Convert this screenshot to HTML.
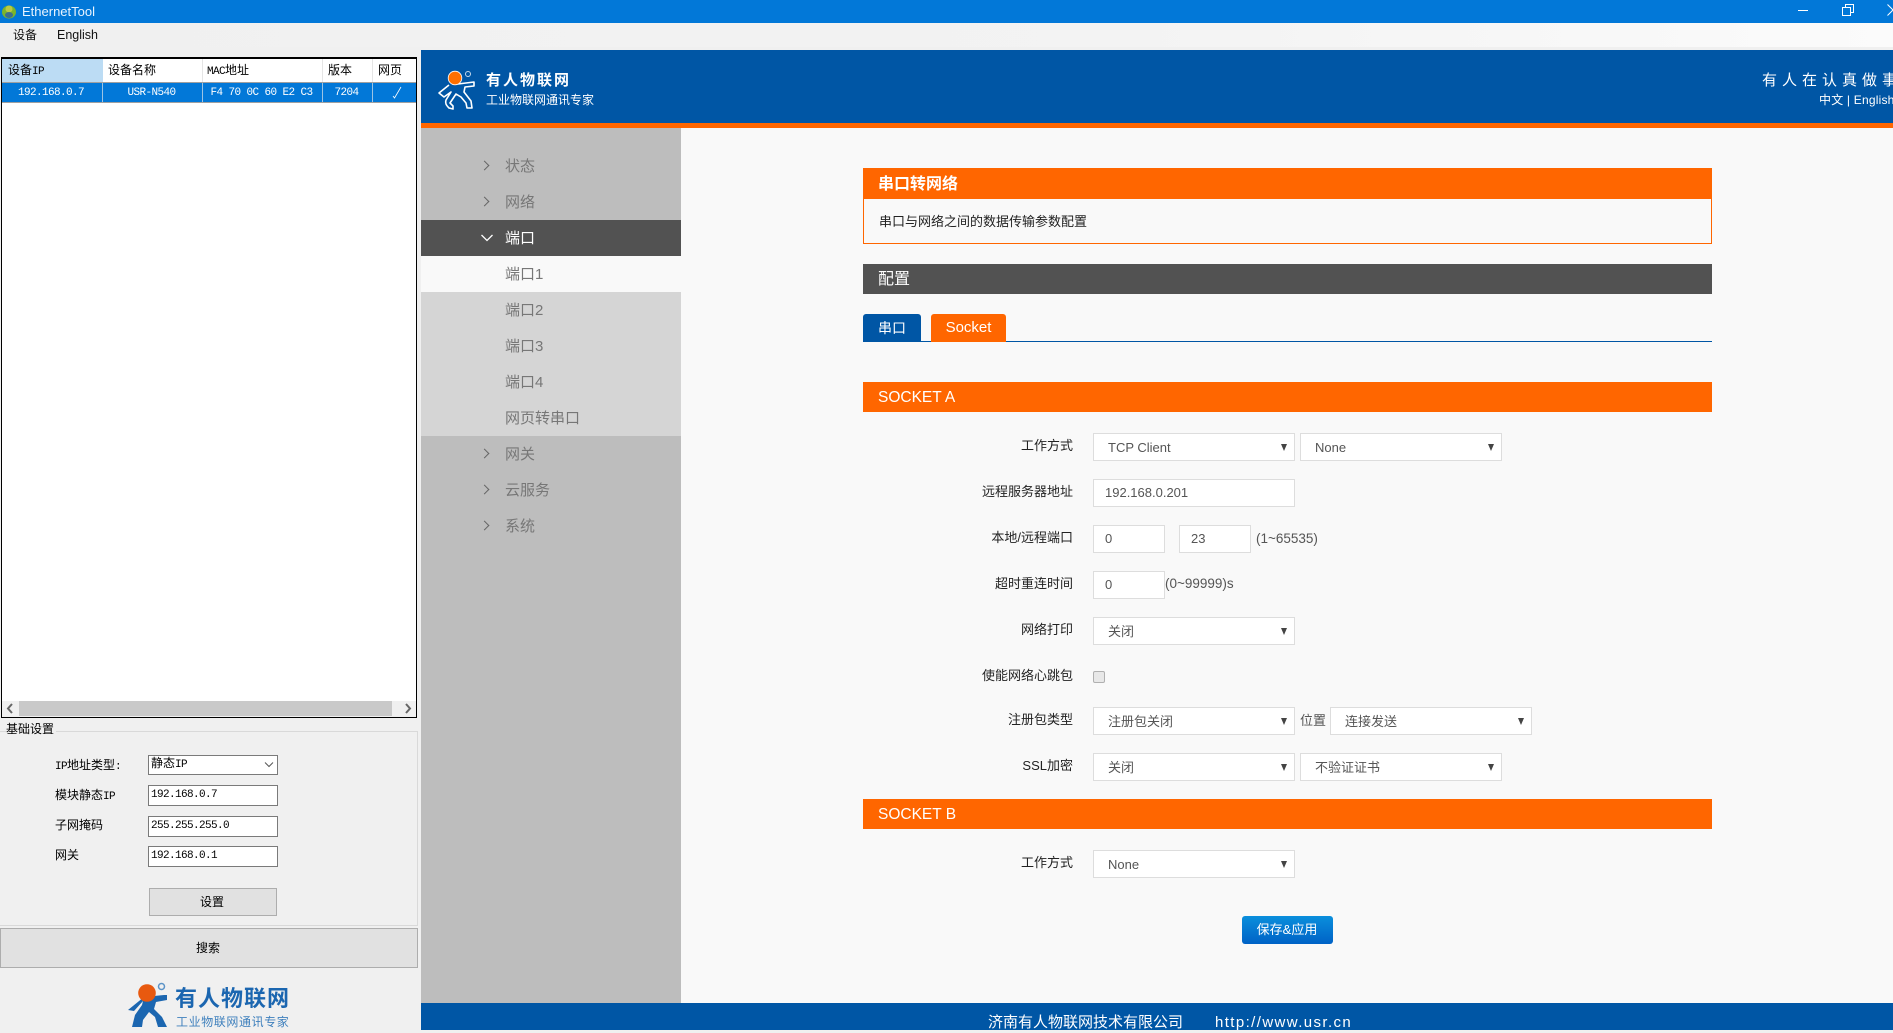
<!DOCTYPE html>
<html lang="zh-CN"><head><meta charset="utf-8"><title>EthernetTool</title>
<style>
html,body{margin:0;padding:0}
body{width:1893px;height:1030px;overflow:hidden;position:relative;background:#f0f0f0;font-family:"Liberation Sans","Noto Sans CJK SC",sans-serif}
.a{position:absolute;box-sizing:border-box;white-space:nowrap}
.l{font-family:"Liberation Mono","WenQuanYi Zen Hei",monospace;font-size:12px;color:#000;line-height:16px}
.m{font-family:"Liberation Mono",monospace;font-size:11px;letter-spacing:-.6px;line-height:16px}
.w{color:#fff}
.n{left:421px;width:260px;height:36px;line-height:38px;padding-left:84px;font-size:15px;color:#777}
.ch{width:7px;height:7px;border-top:1.3px solid #666;border-right:1.3px solid #666;transform:rotate(45deg);left:481px}
.t{left:863px;width:849px;color:#fff;font-size:15.500px;padding-left:15px}
.lb{left:900px;width:173px;text-align:right;font-size:13px;color:#222;line-height:18px}
.s{height:28px;background:#fff;border:1px solid #ddd;font-size:13px;color:#555;line-height:28px;padding-left:14px}
.s:after{content:"";position:absolute;right:7px;top:10px;border-left:3.5px solid transparent;border-right:3.5px solid transparent;border-top:7px solid #444}
.i{height:28px;background:#fff;border:1px solid #ddd;font-size:13px;color:#555;line-height:26px;padding-left:11px}
.h{font-size:13.500px;color:#555;line-height:18px}
.in{left:148px;width:130px;background:#fff;border:1px solid #7a7a7a;padding-left:2px;line-height:18px}
</style></head><body>
<!-- title bar -->
<div class="a" style="left:0;top:0;width:1893px;height:23px;background:#0278d8"></div>
<svg class="a" style="left:1px;top:3px" width="17" height="17" viewBox="0 0 17 17"><ellipse cx="8" cy="9" rx="7" ry="6.5" fill="#7bb52c"/><ellipse cx="8" cy="6" rx="3.5" ry="3.5" fill="#b9c944"/><ellipse cx="8" cy="12" rx="4" ry="3" fill="#3d6f8f"/></svg>
<div class="a" style="left:22px;top:4px;font-size:13px;line-height:16px;color:#e9f4ff">EthernetTool</div>
<div class="a" style="left:1798px;top:10px;width:10px;height:1px;background:#fff"></div>
<svg class="a" style="left:1842px;top:4px" width="12" height="12" viewBox="0 0 12 12" fill="none" stroke="#fff"><rect x=".5" y="3.5" width="8" height="8" fill="#0278d8"/><path d="M3.500 3.500V.5h8v8H8.500"/></svg>
<svg class="a" style="left:1887px;top:4px" width="6" height="12" viewBox="0 0 6 12" fill="none" stroke="#fff"><path d="M.5.5L6 6M.5 11.500L6 6"/></svg>
<!-- menu -->
<div class="a" style="left:0;top:23px;width:1893px;height:24px;background:linear-gradient(90deg,#f0f0f0,#f3f3f3 60%,#fbfbfb)"></div>
<div class="a" style="left:13px;top:26px;font-size:12px;line-height:18px;color:#111">设备</div>
<div class="a" style="left:57px;top:26px;font-size:12.500px;line-height:18px;color:#111">English</div>
<!-- device table -->
<div class="a" style="left:1px;top:57px;width:416px;height:661px;background:#fff;border:1px solid #000;border-top-width:2px"></div>
<div class="a" style="left:2px;top:59px;width:101px;height:23px;background:#bcdcf4"></div>
<div class="a" style="left:202px;top:59px;width:1px;height:23px;background:#e5e5e5"></div>
<div class="a" style="left:322px;top:59px;width:1px;height:23px;background:#e5e5e5"></div>
<div class="a" style="left:372px;top:59px;width:1px;height:23px;background:#e5e5e5"></div>
<div class="a l" style="left:8px;top:63px">设备<span class="m">IP</span></div>
<div class="a l" style="left:108px;top:63px">设备名称</div>
<div class="a l" style="left:207px;top:63px"><span class="m">MAC</span>地址</div>
<div class="a l" style="left:328px;top:63px">版本</div>
<div class="a l" style="left:378px;top:63px">网页</div>
<div class="a" style="left:2px;top:82px;width:414px;height:21px;background:#0278d8;border-top:1px solid #a0a0a0;border-bottom:1px solid #a0a0a0"></div>
<div class="a" style="left:102px;top:83px;width:1px;height:19px;background:#9cc4e4"></div>
<div class="a" style="left:202px;top:83px;width:1px;height:19px;background:#9cc4e4"></div>
<div class="a" style="left:322px;top:83px;width:1px;height:19px;background:#9cc4e4"></div>
<div class="a" style="left:372px;top:83px;width:1px;height:19px;background:#9cc4e4"></div>
<div class="a m w" style="left:1px;top:85px;width:100px;text-align:center">192.168.0.7</div>
<div class="a m w" style="left:102px;top:85px;width:99px;text-align:center">USR-N540</div>
<div class="a m w" style="left:202px;top:85px;width:119px;text-align:center">F4 70 0C 60 E2 C3</div>
<div class="a m w" style="left:322px;top:85px;width:49px;text-align:center">7204</div>
<svg class="a" style="left:391px;top:86px" width="12" height="13" viewBox="0 0 12 13" fill="none" stroke="#fff" stroke-width=".8"><path d="M2 10l1.500 2L10 1"/></svg>
<!-- scrollbar -->
<div class="a" style="left:2px;top:701px;width:414px;height:16px;background:#f0f0f0"></div>
<div class="a" style="left:19px;top:701px;width:373px;height:15px;background:#c9c9c9"></div>
<svg class="a" style="left:5px;top:703px" width="10" height="11" viewBox="0 0 10 11" fill="none" stroke="#666" stroke-width="2"><path d="M7 1L3 5.500 7 10"/></svg>
<svg class="a" style="left:403px;top:703px" width="10" height="11" viewBox="0 0 10 11" fill="none" stroke="#666" stroke-width="2"><path d="M3 1L7 5.500 3 10"/></svg>
<!-- settings -->
<div class="a" style="left:-2px;top:731px;width:420px;height:195px;border:1px solid #d9d9d9"></div>
<div class="a l" style="left:6px;top:722px;background:#f0f0f0;padding-right:2px">基础设置</div>
<div class="a l" style="left:55px;top:758px"><span class="m">IP</span>地址类型<span class="m">:</span></div>
<div class="a l" style="left:55px;top:788px">模块静态<span class="m">IP</span></div>
<div class="a l" style="left:55px;top:818px">子网掩码</div>
<div class="a l" style="left:55px;top:848px">网关</div>
<div class="a in l" style="top:755px;height:20px;line-height:17px">静态<span class="m">IP</span></div>
<svg class="a" style="left:264px;top:761px" width="10" height="8" viewBox="0 0 10 8" fill="none" stroke="#555"><path d="M1 1.500l4 4 4-4"/></svg>
<div class="a in m" style="top:785px;height:21px">192.168.0.7</div>
<div class="a in m" style="top:816px;height:21px">255.255.255.0</div>
<div class="a in m" style="top:846px;height:21px">192.168.0.1</div>
<div class="a l" style="left:149px;top:888px;width:128px;height:28px;background:#e1e1e1;border:1px solid #adadad;padding-right:2px;text-align:center;line-height:28px">设置</div>
<div class="a l" style="left:0;top:928px;width:418px;height:40px;background:#e1e1e1;border:1px solid #adadad;padding-right:2px;text-align:center;line-height:40px">搜索</div>
<!-- bottom logo -->
<svg class="a" style="left:120px;top:975px" width="60" height="55" viewBox="0 0 60 55"><path d="M8 35L24 22l20-2 3 0V25L36 27l-2 7 8 8 5 10H38l-3-10-6-5-6 8-1 7H12l3-12 7-10 1-4-9 10z" fill="#1b66b0"/><circle cx="27" cy="18" r="8.800" fill="#e8590f"/><circle cx="41.500" cy="11.500" r="3" fill="none" stroke="#5d94c7" stroke-width="1.500"/></svg>
<div class="a" style="left:175px;top:985px;font-size:22px;font-weight:700;line-height:28px;color:#1b66b0;letter-spacing:1px">有人物联网</div>
<div class="a" style="left:176px;top:1013px;font-size:12px;line-height:18px;color:#3f80bd;letter-spacing:.6px">工业物联网通讯专家</div>
<!-- web header -->
<div class="a" style="left:421px;top:50px;width:1472px;height:73px;background:#0056a5"></div>
<div class="a" style="left:421px;top:123px;width:1472px;height:5px;background:#ff6600"></div>
<svg class="a" style="left:432px;top:66px" width="48" height="46" viewBox="0 0 48 46"><path d="M17 19L7 27l5 4 7-5-5 8c-1 3 0 5 3 8l4 1 0-3-3-3 6-9 5 3 5 6 1 5h5l-1-7-7-9 1-5 9-1v-4l-16 2" fill="none" stroke="#fff" stroke-width="1.600" stroke-linejoin="round"/><circle cx="23" cy="12" r="6.800" fill="#ff6f00" stroke="#fff" stroke-width=".8"/><circle cx="36" cy="8" r="2.500" fill="none" stroke="#c4d8ec"/></svg>
<div class="a w" style="left:486px;top:71px;font-size:15px;font-weight:700;line-height:20px;letter-spacing:2px">有人物联网</div>
<div class="a w" style="left:486px;top:92px;font-size:12px;line-height:16px">工业物联网通讯专家</div>
<div class="a w" style="left:1762px;top:72px;font-size:15px;line-height:18px;letter-spacing:5px">有人在认真做事</div>
<div class="a w" style="left:1819px;top:92px;font-size:12px;line-height:16px;letter-spacing:.2px">中文 | English</div>
<!-- sidebar -->
<div class="a" style="left:421px;top:128px;width:260px;height:875px;background:#bdbdbd"></div>
<div class="a" style="left:681px;top:128px;width:1212px;height:875px;background:#f9f9f9"></div>
<div class="a n" style="top:148px">状态</div><div class="a ch" style="top:162px"></div>
<div class="a n" style="top:184px">网络</div><div class="a ch" style="top:198px"></div>
<div class="a n" style="top:220px;background:#525252;color:#fff">端口</div>
<svg class="a" style="left:480px;top:233px" width="14" height="10" viewBox="0 0 14 10" fill="none" stroke="#fff" stroke-width="1.300"><path d="M1.500 2l5.500 5.500L12.500 2"/></svg>
<div class="a n" style="top:256px;background:#f9f9f9">端口1</div>
<div class="a n" style="top:292px;background:#d5d5d5">端口2</div>
<div class="a n" style="top:328px;background:#d5d5d5">端口3</div>
<div class="a n" style="top:364px;background:#d5d5d5">端口4</div>
<div class="a n" style="top:400px;background:#d5d5d5">网页转串口</div>
<div class="a n" style="top:436px">网关</div><div class="a ch" style="top:450px"></div>
<div class="a n" style="top:472px">云服务</div><div class="a ch" style="top:486px"></div>
<div class="a n" style="top:508px">系统</div><div class="a ch" style="top:522px"></div>
<!-- content -->
<div class="a" style="left:863px;top:168px;width:849px;height:76px;border:1px solid #ff6600"></div>
<div class="a t" style="top:168px;height:31px;line-height:33px;background:#ff6600;font-weight:700;font-size:16px">串口转网络</div>
<div class="a" style="left:879px;top:213px;font-size:13px;line-height:18px;color:#222">串口与网络之间的数据传输参数配置</div>
<div class="a t" style="top:264px;height:30px;line-height:32px;background:#525252;font-size:16px">配置</div>
<div class="a" style="left:863px;top:341px;width:849px;height:1px;background:#0056a5"></div>
<div class="a w" style="left:863px;top:314px;width:58px;height:28px;line-height:28px;background:#0056a5;border-radius:3px 3px 0 0;text-align:center;font-size:14px">串口</div>
<div class="a w" style="left:931px;top:314px;width:75px;height:28px;line-height:28px;background:#ff6600;border-radius:3px 3px 0 0;text-align:center;font-size:15px">Socket</div>
<div class="a t" style="top:382px;height:30px;line-height:32px;background:#ff6600">SOCKET A</div>

<div class="a lb" style="top:437px">工作方式</div>
<div class="a s" style="left:1093px;top:433px;width:202px">TCP Client</div>
<div class="a s" style="left:1300px;top:433px;width:202px">None</div>
<div class="a lb" style="top:483px">远程服务器地址</div>
<div class="a i" style="left:1093px;top:479px;width:202px">192.168.0.201</div>
<div class="a lb" style="top:529px">本地/远程端口</div>
<div class="a i" style="left:1093px;top:525px;width:72px">0</div>
<div class="a i" style="left:1179px;top:525px;width:72px">23</div>
<div class="a h" style="left:1256px;top:530px">(1~65535)</div>
<div class="a lb" style="top:575px">超时重连时间</div>
<div class="a i" style="left:1093px;top:571px;width:72px">0</div>
<div class="a h" style="left:1165px;top:575px">(0~99999)s</div>
<div class="a lb" style="top:621px">网络打印</div>
<div class="a s" style="left:1093px;top:617px;width:202px">关闭</div>
<div class="a lb" style="top:667px">使能网络心跳包</div>
<div class="a" style="left:1093px;top:671px;width:12px;height:12px;background:#e8e8e8;border:1px solid #b0b0b0;border-radius:2px"></div>
<div class="a lb" style="top:711px">注册包类型</div>
<div class="a s" style="left:1093px;top:707px;width:202px">注册包关闭</div>
<div class="a h" style="left:1300px;top:712px;font-size:13px">位置</div>
<div class="a s" style="left:1330px;top:707px;width:202px">连接发送</div>
<div class="a lb" style="top:757px">SSL加密</div>
<div class="a s" style="left:1093px;top:753px;width:202px">关闭</div>
<div class="a s" style="left:1300px;top:753px;width:202px">不验证证书</div>
<div class="a t" style="top:799px;height:30px;line-height:32px;background:#ff6600">SOCKET B</div>
<div class="a lb" style="top:854px">工作方式</div>
<div class="a s" style="left:1093px;top:850px;width:202px">None</div>
<div class="a w" style="left:1242px;top:916px;width:91px;height:28px;line-height:28px;border-radius:3px;background:linear-gradient(#0a8fdc,#0062c6);text-align:center;font-size:13px;padding-right:1px">保存&amp;应用</div>
<!-- footer -->
<div class="a" style="left:421px;top:1003px;width:1472px;height:27px;background:#0056a5"></div>
<div class="a w" style="left:988px;top:1013px;font-size:15px;line-height:20px">济南有人物联网技术有限公司</div>
<div class="a w" style="left:1215px;top:1013px;font-size:15px;line-height:20px;letter-spacing:1.400px">http://www.usr.cn</div>
</body></html>
